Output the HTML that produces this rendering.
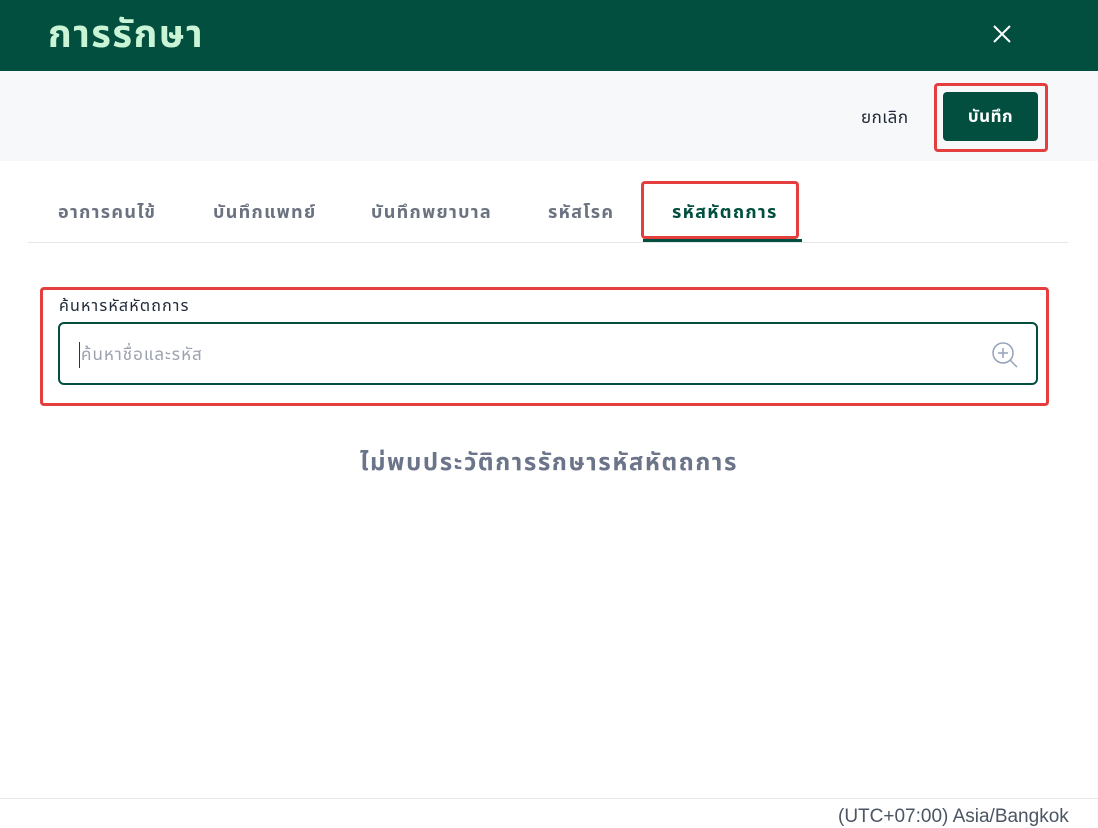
<!DOCTYPE html>
<html><head><meta charset="utf-8"><style>
*{box-sizing:border-box;margin:0;padding:0}
body{width:1098px;height:817px;overflow:hidden;background:#fff;font-family:"Liberation Sans","Noto Sans Thai","Tlwg Typo",sans-serif;position:relative}
.hdr{position:absolute;left:0;top:0;width:1098px;height:71px;background:#024f40}
.title{position:absolute;left:48px;top:12px;font-size:38px;letter-spacing:1.5px;color:#c9f5d6;font-weight:bold;line-height:46px}
.x{position:absolute;left:992px;top:24px}
.bar{position:absolute;left:0;top:71px;width:1098px;height:90px;background:#f7f8fa}
.cancel{position:absolute;left:861px;top:105px;font-size:17px;letter-spacing:.5px;color:#1f2937}
.red{position:absolute;border:3px solid #e53e3e;border-radius:4px}
.btn{position:absolute;left:943px;top:92px;width:95px;height:49px;background:#024f40;border-radius:4px;color:#fff;font-size:17px;letter-spacing:.5px;font-weight:bold;text-align:center;line-height:49px}
.tab{position:absolute;top:200px;font-size:18px;letter-spacing:1.3px;color:#6b7280;font-weight:bold}
.line{position:absolute;left:28px;top:242px;width:1040px;height:1px;background:#e5e7eb}
.act{position:absolute;left:643px;top:239px;width:159px;height:3px;background:#024f40}
.lbl{position:absolute;left:59px;top:295px;font-size:16px;letter-spacing:1.2px;color:#1f2937}
.inp{position:absolute;left:58px;top:322px;width:980px;height:63px;border:2px solid #024f40;border-radius:6px}
.ph{position:absolute;left:79px;top:342px;font-size:17px;letter-spacing:1px;color:#9ca3af;border-left:1px solid #333;padding-left:1px}
.empty{position:absolute;left:0;width:1098px;top:445px;text-align:center;font-size:24px;letter-spacing:1.6px;font-weight:bold;color:#6b7489}
.foot{position:absolute;left:0;top:798px;width:1098px;height:1px;background:#e5e7eb}
.tz{position:absolute;left:838px;top:806px;font-size:19px;color:#4b5563}
</style></head><body>
<div class="hdr"><div class="title">การรักษา</div>
<svg class="x" width="20" height="20" viewBox="0 0 20 20"><path d="M2 2L18 18M18 2L2 18" stroke="#fff" stroke-width="2"/></svg></div>
<div class="bar"></div>
<div class="cancel">ยกเลิก</div>
<div class="red" style="left:934px;top:83px;width:114px;height:69px"></div>
<div class="btn">บันทึก</div>
<div class="tab" style="left:58px">อาการคนไข้</div>
<div class="tab" style="left:213px">บันทึกแพทย์</div>
<div class="tab" style="left:371px">บันทึกพยาบาล</div>
<div class="tab" style="left:548px">รหัสโรค</div>
<div class="tab" style="left:672px;color:#024f40">รหัสหัตถการ</div>
<div class="line"></div><div class="act"></div>
<div class="red" style="left:641px;top:181px;width:158px;height:58px"></div>
<div class="red" style="left:40px;top:287px;width:1009px;height:119px"></div>
<div class="lbl">ค้นหารหัสหัตถการ</div>
<div class="inp"></div>
<div class="ph">ค้นหาชื่อและรหัส</div>
<svg style="position:absolute;left:991px;top:341px" width="28" height="28" viewBox="0 0 28 28"><circle cx="12" cy="12" r="10" fill="none" stroke="#94a3b8" stroke-width="1.5"/><path d="M12 7v10M7 12h10M19 19l7 7" stroke="#94a3b8" stroke-width="1.5"/></svg>
<div class="empty">ไม่พบประวัติการรักษารหัสหัตถการ</div>
<div class="foot"></div>
<div class="tz">(UTC+07:00) Asia/Bangkok</div>
</body></html>
